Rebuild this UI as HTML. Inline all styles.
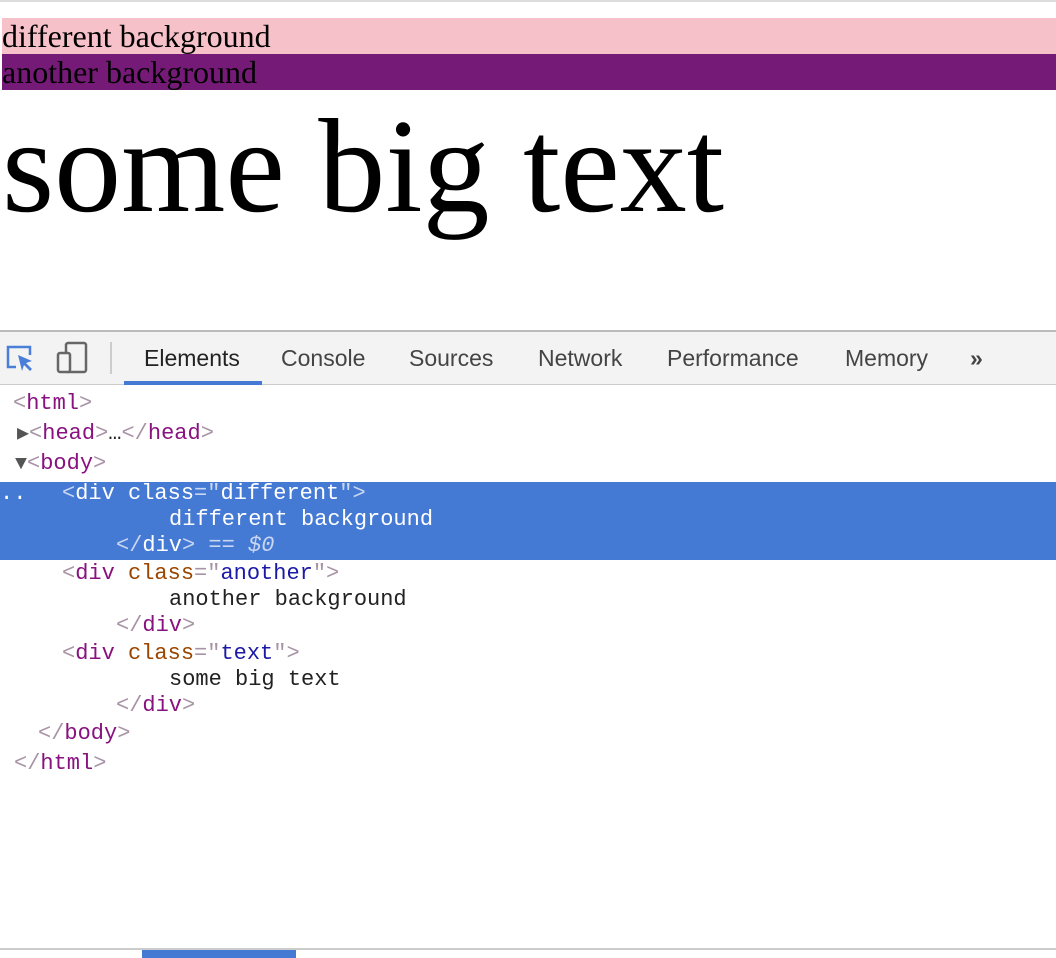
<!DOCTYPE html>
<html><head><style>
body{margin:0;width:1056px;height:958px;position:relative;overflow:hidden;background:#fff}
.a{position:absolute;white-space:pre}
.m{font-family:"Liberation Mono",monospace;font-size:22px;line-height:26px}
.t{color:#881280}.g{color:#a894a6}.n{color:#994500}.v{color:#1a1aa6}.x{color:#222}
.sel .t,.sel .g,.sel .n,.sel .v,.sel .x{color:#fff}.sel .g{color:#c8d6f0}
.tab{position:absolute;top:345px;font-family:"Liberation Sans",sans-serif;font-size:23px;color:#444}
.tri{color:#555;font-size:20px}
</style></head><body>
<div class="a" style="left:0;top:0;width:1056px;height:2px;background:#ddd"></div>
<div class="a" style="left:2px;top:18px;width:1054px;height:36px;background:#f6c1c9;font:32px/36px 'Liberation Serif',serif">different background</div>
<div class="a" style="left:2px;top:54px;width:1054px;height:36px;background:#761a78;font:32px/36px 'Liberation Serif',serif">another background</div>
<div class="a" style="left:2px;top:86px;font:134px/160px 'Liberation Serif',serif">some big text</div>

<div class="a" style="left:0;top:330px;width:1056px;height:55px;background:#f3f3f3;border-top:2px solid #bbb;border-bottom:1px solid #ccc;box-sizing:border-box"></div>
<svg class="a" style="left:4px;top:343px" width="34" height="30" viewBox="0 0 34 30"><path d="M12 24H4V4h22v8" fill="none" stroke="#4a7fd9" stroke-width="2.5"/><path d="M14 12l14 6-6 2 6 6-2 2-6-6-2 6z" fill="#4a7fd9"/></svg>
<svg class="a" style="left:56px;top:341px" width="34" height="34" viewBox="0 0 34 34"><rect x="10" y="2" width="20" height="29" rx="2" fill="none" stroke="#666" stroke-width="2.5"/><rect x="2" y="12" width="12" height="19" rx="2" fill="#f3f3f3" stroke="#666" stroke-width="2.5"/></svg>
<div class="a" style="left:110px;top:342px;width:2px;height:32px;background:#ccc"></div>
<div class="tab" style="left:144px;color:#222">Elements</div>
<div class="a" style="left:124px;top:381px;width:138px;height:4px;background:#4479d4"></div>
<div class="tab" style="left:281px">Console</div>
<div class="tab" style="left:409px">Sources</div>
<div class="tab" style="left:538px">Network</div>
<div class="tab" style="left:667px">Performance</div>
<div class="tab" style="left:845px">Memory</div>
<div class="tab" style="left:970px;font-weight:bold">»</div>

<div class="a m" style="left:13px;top:391px"><span class="g">&lt;</span><span class="t">html</span><span class="g">&gt;</span></div>
<div class="a m" style="left:17px;top:421px"><span class="tri">▶</span><span class="g">&lt;</span><span class="t">head</span><span class="g">&gt;</span><span class="x">…</span><span class="g">&lt;/</span><span class="t">head</span><span class="g">&gt;</span></div>
<div class="a m" style="left:15px;top:451px"><span class="tri">▼</span><span class="g">&lt;</span><span class="t">body</span><span class="g">&gt;</span></div>
<div class="a sel" style="left:0;top:482px;width:1056px;height:78px;background:#4479d4"></div>
<div class="a m sel" style="left:0;top:481px"><span class="x">..</span></div>
<div class="a m sel" style="left:62px;top:481px"><span class="g">&lt;</span><span class="t">div</span> <span class="n">class</span><span class="g">="</span><span class="v">different</span><span class="g">"&gt;</span></div>
<div class="a m sel" style="left:169px;top:507px"><span class="x">different background</span></div>
<div class="a m sel" style="left:116px;top:533px"><span class="g">&lt;/</span><span class="t">div</span><span class="g">&gt;</span> <span class="g">== <i>$0</i></span></div>
<div class="a m" style="left:62px;top:561px"><span class="g">&lt;</span><span class="t">div</span> <span class="n">class</span><span class="g">="</span><span class="v">another</span><span class="g">"&gt;</span></div>
<div class="a m" style="left:169px;top:587px"><span class="x">another background</span></div>
<div class="a m" style="left:116px;top:613px"><span class="g">&lt;/</span><span class="t">div</span><span class="g">&gt;</span></div>
<div class="a m" style="left:62px;top:641px"><span class="g">&lt;</span><span class="t">div</span> <span class="n">class</span><span class="g">="</span><span class="v">text</span><span class="g">"&gt;</span></div>
<div class="a m" style="left:169px;top:667px"><span class="x">some big text</span></div>
<div class="a m" style="left:116px;top:693px"><span class="g">&lt;/</span><span class="t">div</span><span class="g">&gt;</span></div>
<div class="a m" style="left:38px;top:721px"><span class="g">&lt;/</span><span class="t">body</span><span class="g">&gt;</span></div>
<div class="a m" style="left:14px;top:751px"><span class="g">&lt;/</span><span class="t">html</span><span class="g">&gt;</span></div>

<div class="a" style="left:0;top:948px;width:1056px;height:2px;background:#ccc"></div>
<div class="a" style="left:142px;top:950px;width:154px;height:8px;background:#4479d4"></div>
</body></html>
